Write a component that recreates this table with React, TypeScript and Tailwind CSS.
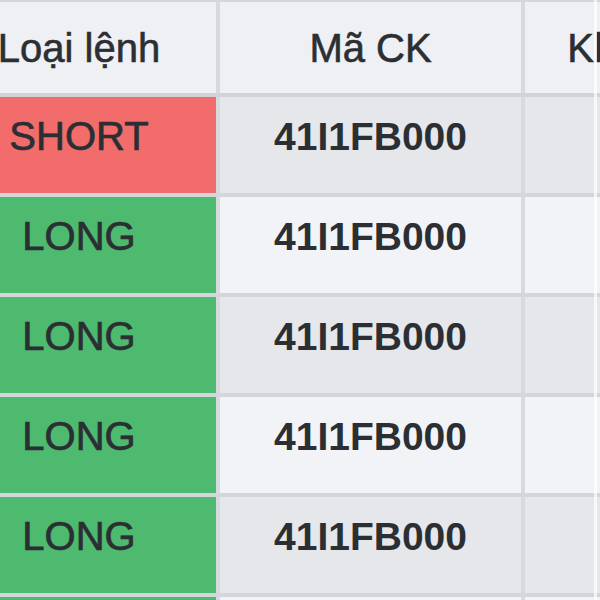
const rows = [
  { side: 'SHORT', code: '41I1FB000' },
  { side: 'LONG', code: '41I1FB000' },
  { side: 'LONG', code: '41I1FB000' },
  { side: 'LONG', code: '41I1FB000' },
  { side: 'LONG', code: '41I1FB000' },
  { side: 'LONG', code: '41I1FB000' },
]

export default function App() {
  return (
    <div
      className="relative w-[600px] h-[600px] overflow-hidden bg-white text-[40px] text-[#2b2f33]"
      style={{ fontFamily: '"Liberation Sans", Arial, sans-serif' }}
    >
      <div className="ml-[-58px] mt-[-2px] w-[880px] border-t-4 border-[#d3d7dc]">
        <div className="flex h-[95px] bg-[#eef0f3] border-b-4 border-[#d0d4d9] [-webkit-text-stroke:0.6px_#2b2f33]">
          <div className="w-[278px] shrink-0 text-center pt-[24px] leading-[45px] border-r-4 border-[#d6dade]">
            Loại lệnh
          </div>
          <div className="w-[305px] shrink-0 text-center pt-[24px] leading-[45px] border-r-4 border-[#d6dade]">
            Mã CK
          </div>
          <div className="w-[270px] shrink-0 text-center pt-[24px] pl-[12px] leading-[45px] whitespace-nowrap">
            Khối lượng
          </div>
        </div>
        {rows.map((r, i) => (
          <div
            key={i}
            className={
              'flex h-[100px] border-b-4 border-[#d3d7dc] ' +
              (i % 2 === 0 ? 'bg-[#e6e7ea]' : 'bg-[#f1f3f6]')
            }
          >
            <div
              className={
                'w-[278px] shrink-0 text-center pt-[17px] leading-[45px] border-r-4 border-[#d6dade] [-webkit-text-stroke:0.7px_#2b2f33] ' +
                (r.side === 'SHORT' ? 'bg-[#f26c6b]' : 'bg-[#4dba6f]')
              }
            >
              {r.side}
            </div>
            <div className="w-[305px] shrink-0 text-center pt-[17px] leading-[45px] text-[39px] font-bold border-r-4 border-[#d6dade]">
              {r.code}
            </div>
            <div className="w-[270px] shrink-0" />
          </div>
        ))}
      </div>
      <div className="absolute top-0 bottom-0 left-[594px] w-[3px] bg-white/70" />
    </div>
  )
}
